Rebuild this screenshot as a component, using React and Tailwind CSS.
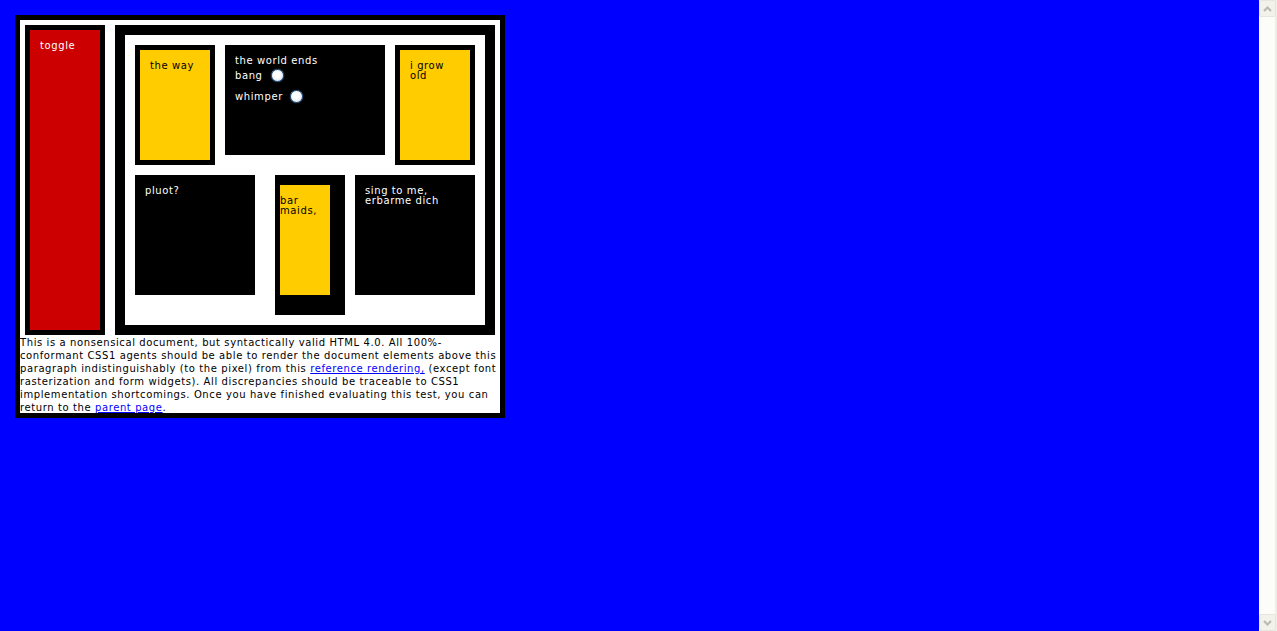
const font = "font-['DejaVu_Sans','Verdana',sans-serif]"

function Radio() {
  return (
    <span className="inline-block w-[13px] h-[13px] rounded-full border border-[#2f5f8f] bg-[radial-gradient(circle_at_45%_40%,#ffffff_35%,#c9d6e4)] shadow-[0_0_1px_#6b9bd1]" />
  )
}

function Li({ children }) {
  return (
    <div className="w-[80px] h-[120px] shrink-0 border-[5px] border-black bg-[#ffcc00] p-[10px] pt-[11px] text-black text-[10px] leading-[10px]">
      {children}
    </div>
  )
}

function ScrollButton({ up }) {
  return (
    <div className="w-[17px] h-[17px] flex items-center justify-center bg-[#f2f1eb] border border-[#e6e5de] rounded-[2px]">
      <svg width="9" height="6" viewBox="0 0 9 6">
        <polyline
          points={up ? '1,5 4.5,1.5 8,5' : '1,1 4.5,4.5 8,1'}
          fill="none"
          stroke="#b9b9b1"
          strokeWidth="2"
        />
      </svg>
    </div>
  )
}

export default function App() {
  return (
    <div className={`flex h-[631px] w-full overflow-hidden ${font} tracking-[0.6px]`}>
      <div className="flex-1 bg-[#0000ff] text-white text-[10px] leading-[10px]">
        <div className="ml-[15px] mt-[15px] w-[490px] border-[5px] border-black bg-white">
          <div className="pt-[5px] px-[5px] flex justify-between">
            <div className="w-[80px] h-[310px] border-[5px] border-black bg-[#cc0000] p-[10px] pt-[11px] text-white">
              toggle
            </div>
            <div className="w-[380px] h-[310px] border-[10px] border-black p-[10px]">
              <div className="flex items-start">
                <Li>the way</Li>
                <div className="mx-[10px] w-[160px] h-[110px] bg-black p-[10px] pt-[11px] text-white">
                  <p>the world ends</p>
                  <div className="h-[21px] -mt-[1px] flex items-center gap-[8px]">
                    <span className="pt-[1px]">bang</span>
                    <Radio />
                  </div>
                  <div className="h-[21px] flex items-center gap-[7px]">
                    <span className="pt-[1px]">whimper</span>
                    <Radio />
                  </div>
                </div>
                <Li>i grow<br />old</Li>
              </div>
              <div className="flex items-start">
                <div className="mt-[10px] w-[120px] h-[120px] bg-black p-[10px] pt-[11px] text-white">pluot?</div>
                <div className="mt-[10px] ml-[20px] mr-[10px] w-[70px] h-[140px] border-t-[10px] border-r-[15px] border-b-[20px] border-l-[5px] border-black bg-[#ffcc00] pt-[11px] pb-[10px] text-black">
                  bar<br />maids,
                </div>
                <div className="mt-[10px] w-[120px] h-[120px] bg-black p-[10px] pt-[11px] text-white">
                  sing to me,<br />erbarme dich
                </div>
              </div>
            </div>
          </div>
          <p className="text-black text-[10px] leading-[13px] pt-[1px] -mb-[1px] whitespace-nowrap">
            This is a nonsensical document, but syntactically valid HTML 4.0. All 100%-<br />
            conformant CSS1 agents should be able to render the document elements above this<br />
            paragraph indistinguishably (to the pixel) from this <a href="#" className="text-[#0000ff] underline">reference rendering,</a> (except font<br />
            rasterization and form widgets). All discrepancies should be traceable to CSS1<br />
            implementation shortcomings. Once you have finished evaluating this test, you can<br />
            return to the <a href="#" className="text-[#0000ff] underline">parent page</a>.
          </p>
        </div>
      </div>
      <div className="w-[18px] h-full flex flex-col justify-between bg-[#fcfcf8] border-r-2 border-[#eeede6]">
        <ScrollButton up />
        <ScrollButton />
      </div>
    </div>
  )
}
